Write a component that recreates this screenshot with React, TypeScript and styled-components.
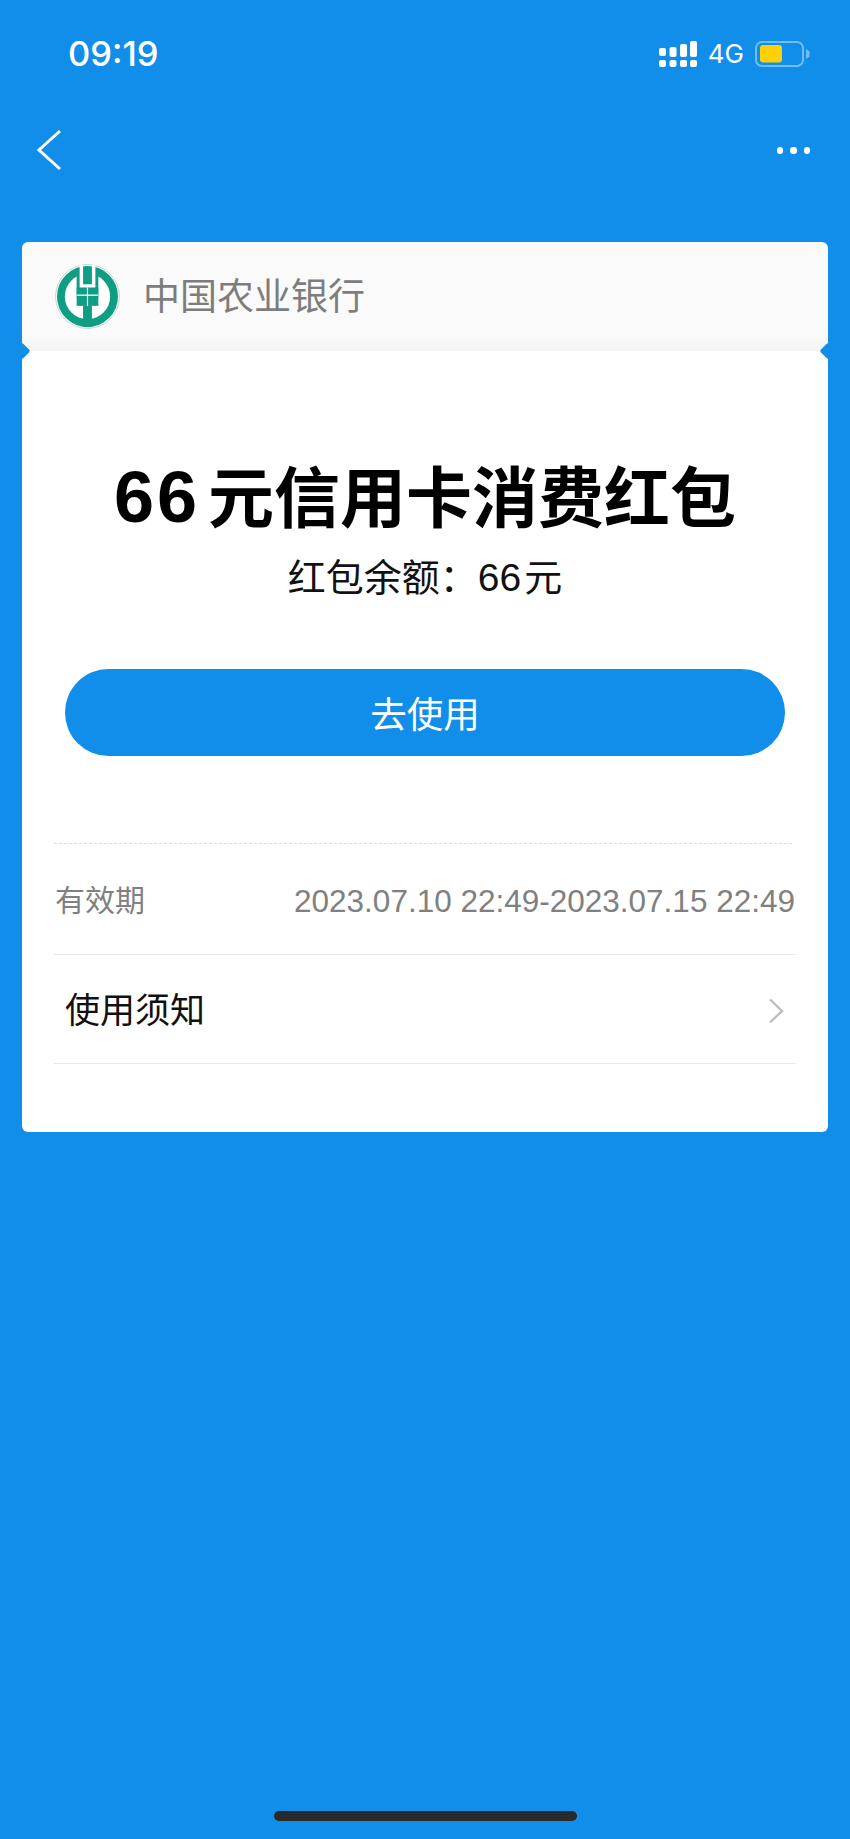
import { createGlobalStyle, styled } from 'styled-components'

const GlobalStyle = createGlobalStyle`
  html, body {
    margin: 0;
    padding: 0;
    background: #118eea;
  }
  body {
    font-family: "Liberation Sans", "Noto Sans CJK SC", sans-serif;
  }
`

const Screen = styled.div`
  width: 850px;
  height: 1839px;
  background: #118eea;
  display: flex;
  flex-direction: column;
  overflow: hidden;
`

const StatusBar = styled.div`
  height: 108px;
  box-sizing: border-box;
  padding: 34px 40px 0 68px;
  display: flex;
  justify-content: space-between;
  align-items: flex-start;
  color: #fff;
`

const Clock = styled.div`
  font-family: Inter, "Liberation Sans", sans-serif;
  font-size: 34.5px;
  line-height: 40px;
  font-weight: 500;
`

const StatusIcons = styled.div`
  display: flex;
  align-items: center;
  gap: 11px;
  height: 40px;
`

const Network = styled.span`
  font-family: Inter, "Liberation Sans", sans-serif;
  font-size: 26px;
  line-height: 30px;
`

const NavBar = styled.div`
  height: 134px;
  box-sizing: border-box;
  padding: 21px 40px 0 36px;
  display: flex;
  justify-content: space-between;
  align-items: flex-start;
`

const MoreDots = styled.div`
  display: flex;
  gap: 7px;
  margin-top: 18px;
`

const Dot = styled.span`
  width: 6.5px;
  height: 6.5px;
  border-radius: 50%;
  background: #fff;
`

const Card = styled.div`
  margin: 0 22px;
  width: 806px;
  display: flex;
  flex-direction: column;
`

const CardHead = styled.div`
  height: 109px;
  box-sizing: border-box;
  padding: 0 0 0 33px;
  background: linear-gradient(#fafafa 0, #fafafa 85%, #f3f3f3 100%);
  border-radius: 6px 6px 0 0;
  display: flex;
  align-items: center;
  gap: 23px;
  position: relative;
`

const Notch = styled.span<{ $side: 'left' | 'right' }>`
  position: absolute;
  bottom: -6px;
  ${p => p.$side}: -6px;
  width: 12px;
  height: 12px;
  background: #118eea;
  transform: rotate(45deg);
  border-radius: 2px;
`

const BankName = styled.div`
  font-size: 37px;
  line-height: 40px;
  color: #7d7d7d;
  padding-top: 2px;
`

const CardBody = styled.div`
  height: 781px;
  box-sizing: border-box;
  background: #fff;
  border-radius: 0 0 6px 6px;
  padding: 108px 32px 0;
  display: flex;
  flex-direction: column;
`

const Title = styled.div`
  text-align: center;
  font-size: 66px;
  line-height: 76px;
  font-weight: 700;
  color: #000;
  white-space: nowrap;
`

const TitleAmount = styled.span`
  font-size: 72px;
  letter-spacing: 3px;
  margin-right: 8px;
`

const Balance = styled.div`
  margin-top: 18px;
  text-align: center;
  font-size: 38px;
  line-height: 46px;
  color: #111;
`

const BalanceAmount = styled.span`
  font-size: 39px;
  margin-right: 3px;
`

const UseButton = styled.div`
  margin: 68px 11px 0;
  height: 87px;
  border-radius: 44px;
  background: #118eea;
  color: #fff;
  font-size: 36.5px;
  display: flex;
  align-items: center;
  justify-content: center;
`

const Dashed = styled.div`
  margin: 87px 4px 0 0;
  border-top: 1.5px dashed #dedede;
`

const Row = styled.div<{ $height: number }>`
  height: ${p => p.$height}px;
  box-sizing: border-box;
  padding-top: 3px;
  display: flex;
  align-items: center;
  justify-content: space-between;
  border-bottom: 1px solid #e8e8e8;
`

const Label = styled.span`
  font-size: 30px;
  line-height: 40px;
  color: #808080;
  padding-left: 1px;
`

const Dates = styled.span`
  font-size: 31.5px;
  line-height: 40px;
  color: #808080;
  white-space: nowrap;
  padding-right: 1px;
`

const Notice = styled.span`
  font-size: 35px;
  line-height: 40px;
  color: #111;
  padding-left: 11px;
`

const Chevron = styled.svg`
  margin-right: 12px;
`

const Spacer = styled.div`
  flex: 1;
`

const HomeBar = styled.div`
  width: 303px;
  height: 10px;
  margin: 0 auto 18px;
  border-radius: 5px;
  background: #282a2c;
`

const SignalIcon = () => (
  <svg width="38" height="28" viewBox="0 0 38 28">
    <g fill="#fff">
      <rect x="0" y="8" width="7" height="8" rx="2" />
      <rect x="10.5" y="7" width="7" height="10" rx="2" />
      <rect x="21" y="4" width="7" height="13" rx="2" />
      <rect x="31" y="1" width="7" height="16" rx="2" />
      <rect x="0" y="20" width="7" height="7" rx="2" />
      <rect x="10.5" y="20" width="7" height="7" rx="2" />
      <rect x="21" y="20" width="7" height="7" rx="2" />
      <rect x="31" y="20" width="7" height="7" rx="2" />
    </g>
  </svg>
)

const BatteryIcon = () => (
  <svg width="55" height="28" viewBox="0 0 55 28">
    <rect x="1" y="2" width="47" height="24" rx="6" fill="none" stroke="#70bdf4" strokeWidth="2" />
    <rect x="5" y="5" width="22" height="17.5" rx="3" fill="#ffd006" />
    <path d="M51 9 L54.5 11.5 V16.5 L51 19 Z" fill="#70bdf4" />
  </svg>
)

const BankLogo = () => (
  <svg width="65" height="65" viewBox="-33 -33 66 66">
    <circle r="32.4" fill="#fff" stroke="#b9d6cf" strokeWidth="1" />
    <circle r="31" fill="#0f9d84" />
    <circle r="23" fill="#fff" />
    <rect x="-11" y="-29" width="22" height="30" fill="#0f9d84" />
    <path d="M-8-32h3.5v19.5h9V-32H8v23h-16z" fill="#fff" />
    <path d="M-11-9h22v18.5h-22z" fill="#0f9d84" />
    <rect x="-4.5" y="9" width="9" height="22" fill="#0f9d84" />
    <rect x="-11" y="-2" width="22" height="1.3" fill="#fff" />
    <rect x="-0.6" y="-9" width="1.2" height="18.5" fill="#fff" />
  </svg>
)

export default function App() {
  return (
    <Screen>
      <GlobalStyle />
      <StatusBar>
        <Clock>09:19</Clock>
        <StatusIcons>
          <SignalIcon />
          <Network>4G</Network>
          <BatteryIcon />
        </StatusIcons>
      </StatusBar>
      <NavBar>
        <svg width="26" height="42" viewBox="0 0 26 42">
          <path d="M24 2 L3 21 L24 40" fill="none" stroke="#fff" strokeWidth="3" />
        </svg>
        <MoreDots>
          <Dot />
          <Dot />
          <Dot />
        </MoreDots>
      </NavBar>
      <Card>
        <CardHead>
          <BankLogo />
          <BankName>中国农业银行</BankName>
          <Notch $side="left" />
          <Notch $side="right" />
        </CardHead>
        <CardBody>
          <Title><TitleAmount>66</TitleAmount>元信用卡消费红包</Title>
          <Balance>红包余额：<BalanceAmount>66</BalanceAmount>元</Balance>
          <UseButton>去使用</UseButton>
          <Dashed />
          <Row $height={111}>
            <Label>有效期</Label>
            <Dates>2023.07.10 22:49-2023.07.15 22:49</Dates>
          </Row>
          <Row $height={109}>
            <Notice>使用须知</Notice>
            <Chevron width="16" height="26" viewBox="0 0 16 26">
              <path d="M2 1.5 L14 13 L2 24.5" fill="none" stroke="#bdbdbd" strokeWidth="2.4" />
            </Chevron>
          </Row>
        </CardBody>
      </Card>
      <Spacer />
      <HomeBar />
    </Screen>
  )
}
